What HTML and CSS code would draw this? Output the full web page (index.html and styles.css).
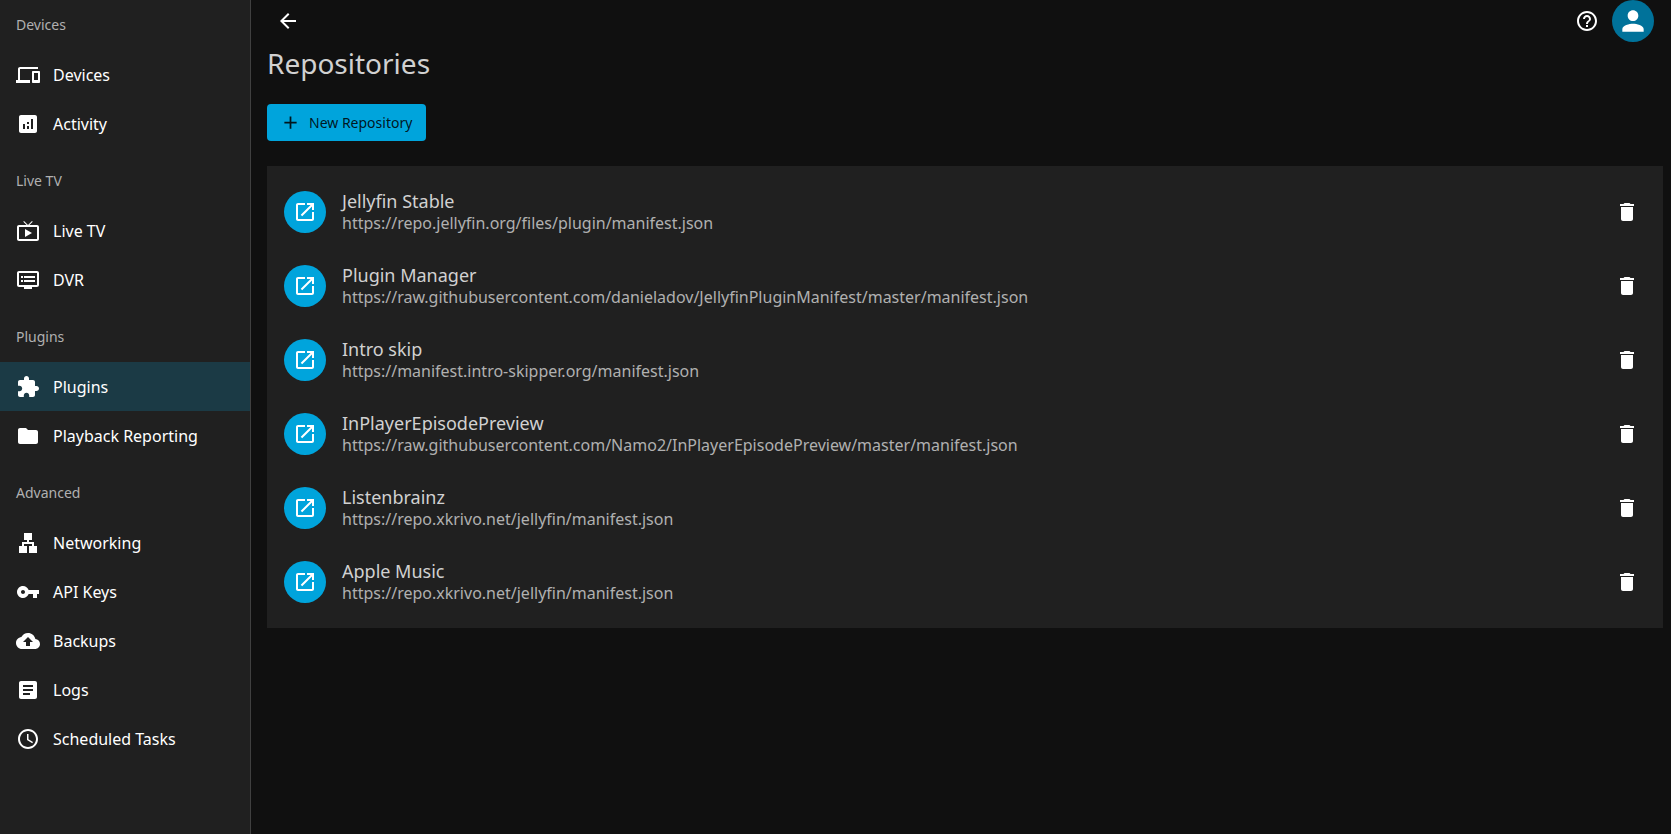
FILE: index.html
```html
<!DOCTYPE html>
<html lang="en">
<head>
  <meta charset="UTF-8">
  <meta name="viewport" content="width=device-width, initial-scale=1.0">
  <title>Repositories</title>
  <link rel="stylesheet" href="styles.css">
</head>
<body>
  <!-- Icons shared by several elements -->
  <svg class="sprite" aria-hidden="true">
    <symbol id="open" viewBox="0 0 24 24"><path d="M19 19H5V5h7V3H5c-1.110 0-2 .9-2 2v14c0 1.100.890 2 2 2h14c1.100 0 2-.9 2-2v-7h-2zM14 3v2h3.590l-9.830 9.830 1.410 1.410L19 6.410V10h2V3z"/></symbol>
    <symbol id="trash" viewBox="0 0 24 24"><path d="M6 19c0 1.100.9 2 2 2h8c1.100 0 2-.9 2-2V7H6zM19 4h-3.500l-1-1h-5l-1 1H5v2h14z"/></symbol>
  </svg>

  <div class="layout">
    <nav class="sidebar">
      <section>
        <h2>Devices</h2>
        <a href="#devices"><svg class="icon" viewBox="0 0 24 24"><path d="M4 6h18V4H4c-1.100 0-2 .9-2 2v11H0v3h14v-3H4zm19 2h-6c-.550 0-1 .450-1 1v10c0 .550.450 1 1 1h6c.550 0 1-.450 1-1V9c0-.550-.450-1-1-1m-1 9h-4v-7h4z"/></svg>Devices</a>
        <a href="#activity"><svg class="icon" viewBox="0 0 24 24"><path d="M19 3H5c-1.100 0-2 .9-2 2v14c0 1.100.9 2 2 2h14c1.100 0 2-.9 2-2V5c0-1.100-.9-2-2-2M9 17H7v-5h2zm4 0h-2v-3h2zm0-5h-2v-2h2zm4 5h-2V7h2z"/></svg>Activity</a>
      </section>
      <section>
        <h2>Live TV</h2>
        <a href="#livetv"><svg class="icon" viewBox="0 0 24 24"><path d="M21 6h-7.590l3.290-3.290L16 2l-4 4-4-4-.710.710L10.590 6H3c-1.100 0-2 .890-2 2v12c0 1.100.9 2 2 2h18c1.100 0 2-.9 2-2V8c0-1.110-.9-2-2-2m0 14H3V8h18zM9 10v8l7-4z"/></svg>Live TV</a>
        <a href="#dvr"><svg class="icon" viewBox="0 0 24 24"><path d="M21 3H3c-1.100 0-2 .9-2 2v12c0 1.100.9 2 2 2h5v2h8v-2h5c1.100 0 1.990-.9 1.990-2L23 5c0-1.100-.9-2-2-2m0 14H3V5h18zm-2-9H8v2h11zm0 4H8v2h11zM7 8H5v2h2zm0 4H5v2h2z"/></svg>DVR</a>
      </section>
      <section>
        <h2>Plugins</h2>
        <a href="#plugins" class="active"><svg class="icon" viewBox="0 0 24 24"><path d="M20.500 11H19V7c0-1.100-.9-2-2-2h-4V3.500C13 2.120 11.880 1 10.500 1S8 2.120 8 3.500V5H4c-1.100 0-1.990.9-1.990 2v3.800H3.500c1.490 0 2.700 1.210 2.700 2.700s-1.210 2.700-2.700 2.700H2V20c0 1.100.9 2 2 2h3.800v-1.500c0-1.490 1.210-2.700 2.700-2.700s2.700 1.210 2.700 2.700V22H17c1.100 0 2-.9 2-2v-4h1.500c1.380 0 2.500-1.120 2.500-2.500S21.880 11 20.500 11"/></svg>Plugins</a>
        <a href="#playback"><svg class="icon" viewBox="0 0 24 24"><path d="M10 4H4c-1.100 0-1.990.9-1.990 2L2 18c0 1.100.9 2 2 2h16c1.100 0 2-.9 2-2V8c0-1.100-.9-2-2-2h-8z"/></svg>Playback Reporting</a>
      </section>
      <section>
        <h2>Advanced</h2>
        <a href="#networking"><svg class="icon" viewBox="0 0 24 24"><path d="M13 22h8v-7h-3v-4h-5V9h3V2H8v7h3v2H6v4H3v7h8v-7H8v-2h8v2h-3z"/></svg>Networking</a>
        <a href="#keys"><svg class="icon" viewBox="0 0 24 24"><path d="M12.650 10C11.830 7.670 9.610 6 7 6c-3.310 0-6 2.690-6 6s2.690 6 6 6c2.610 0 4.830-1.670 5.650-4H17v4h4v-4h2v-4zM7 14c-1.100 0-2-.9-2-2s.9-2 2-2 2 .9 2 2-.9 2-2 2"/></svg>API Keys</a>
        <a href="#backups"><svg class="icon" viewBox="0 0 24 24"><path d="M19.350 10.040C18.670 6.590 15.640 4 12 4 9.110 4 6.600 5.640 5.350 8.040 2.340 8.360 0 10.910 0 14c0 3.310 2.690 6 6 6h13c2.760 0 5-2.240 5-5 0-2.640-2.050-4.780-4.650-4.960M14 13v4h-4v-4H7l5-5 5 5z"/></svg>Backups</a>
        <a href="#logs"><svg class="icon" viewBox="0 0 24 24"><path d="M19 3H5c-1.100 0-2 .9-2 2v14c0 1.100.9 2 2 2h14c1.100 0 2-.9 2-2V5c0-1.100-.9-2-2-2m-5 14H7v-2h7zm3-4H7v-2h10zm0-4H7V7h10z"/></svg>Logs</a>
        <a href="#tasks"><svg class="icon" viewBox="0 0 24 24"><path d="M11.990 2C6.470 2 2 6.480 2 12s4.470 10 9.990 10C17.520 22 22 17.520 22 12S17.520 2 11.990 2M12 20c-4.420 0-8-3.580-8-8s3.580-8 8-8 8 3.580 8 8-3.580 8-8 8m.5-13H11v6l5.250 3.150.750-1.230-4.500-2.670z"/></svg>Scheduled Tasks</a>
      </section>
    </nav>

    <div class="content">
      <header class="topbar">
        <button class="icon-button" aria-label="Back"><svg class="icon" viewBox="0 0 24 24"><path d="M20 11H7.830l5.590-5.590L12 4l-8 8 8 8 1.410-1.410L7.830 13H20z"/></svg></button>
        <div class="topbar-right">
          <a class="icon-button" href="#help" aria-label="Help"><svg class="icon" viewBox="0 0 24 24"><path d="M11 18h2v-2h-2zm1-16C6.480 2 2 6.480 2 12s4.480 10 10 10 10-4.480 10-10S17.520 2 12 2m0 18c-4.410 0-8-3.590-8-8s3.590-8 8-8 8 3.590 8 8-3.590 8-8 8m0-14c-2.210 0-4 1.790-4 4h2c0-1.100.9-2 2-2s2 .9 2 2c0 2-3 1.750-3 5h2c0-2.250 3-2.500 3-5 0-2.210-1.790-4-4-4"/></svg></a>
          <button class="round avatar" aria-label="User menu"><svg class="icon" viewBox="0 0 24 24"><path d="M12 12c2.210 0 4-1.790 4-4s-1.790-4-4-4-4 1.790-4 4 1.790 4 4 4m0 2c-2.670 0-8 1.340-8 4v2h16v-2c0-2.660-5.330-4-8-4"/></svg></button>
        </div>
      </header>

      <main>
        <h1>Repositories</h1>
        <button class="new-button"><svg class="icon" viewBox="0 0 24 24"><path d="M19 13h-6v6h-2v-6H5v-2h6V5h2v6h6z"/></svg>New Repository</button>

        <ul class="repo-list">
          <li>
            <a class="round" href="https://repo.jellyfin.org/files/plugin/manifest.json" aria-label="Open Jellyfin Stable"><svg class="icon"><use href="#open"/></svg></a>
            <div class="repo-text">
              <h3>Jellyfin Stable</h3>
              <p>https://repo.jellyfin.org/files/plugin/manifest.json</p>
            </div>
            <button class="icon-button" aria-label="Delete Jellyfin Stable"><svg class="icon"><use href="#trash"/></svg></button>
          </li>
          <li>
            <a class="round" href="https://raw.githubusercontent.com/danieladov/JellyfinPluginManifest/master/manifest.json" aria-label="Open Plugin Manager"><svg class="icon"><use href="#open"/></svg></a>
            <div class="repo-text">
              <h3>Plugin Manager</h3>
              <p>https://raw.githubusercontent.com/danieladov/JellyfinPluginManifest/master/manifest.json</p>
            </div>
            <button class="icon-button" aria-label="Delete Plugin Manager"><svg class="icon"><use href="#trash"/></svg></button>
          </li>
          <li>
            <a class="round" href="https://manifest.intro-skipper.org/manifest.json" aria-label="Open Intro skip"><svg class="icon"><use href="#open"/></svg></a>
            <div class="repo-text">
              <h3>Intro skip</h3>
              <p>https://manifest.intro-skipper.org/manifest.json</p>
            </div>
            <button class="icon-button" aria-label="Delete Intro skip"><svg class="icon"><use href="#trash"/></svg></button>
          </li>
          <li>
            <a class="round" href="https://raw.githubusercontent.com/Namo2/InPlayerEpisodePreview/master/manifest.json" aria-label="Open InPlayerEpisodePreview"><svg class="icon"><use href="#open"/></svg></a>
            <div class="repo-text">
              <h3>InPlayerEpisodePreview</h3>
              <p>https://raw.githubusercontent.com/Namo2/InPlayerEpisodePreview/master/manifest.json</p>
            </div>
            <button class="icon-button" aria-label="Delete InPlayerEpisodePreview"><svg class="icon"><use href="#trash"/></svg></button>
          </li>
          <li>
            <a class="round" href="https://repo.xkrivo.net/jellyfin/manifest.json" aria-label="Open Listenbrainz"><svg class="icon"><use href="#open"/></svg></a>
            <div class="repo-text">
              <h3>Listenbrainz</h3>
              <p>https://repo.xkrivo.net/jellyfin/manifest.json</p>
            </div>
            <button class="icon-button" aria-label="Delete Listenbrainz"><svg class="icon"><use href="#trash"/></svg></button>
          </li>
          <li>
            <a class="round" href="https://repo.xkrivo.net/jellyfin/manifest.json" aria-label="Open Apple Music"><svg class="icon"><use href="#open"/></svg></a>
            <div class="repo-text">
              <h3>Apple Music</h3>
              <p>https://repo.xkrivo.net/jellyfin/manifest.json</p>
            </div>
            <button class="icon-button" aria-label="Delete Apple Music"><svg class="icon"><use href="#trash"/></svg></button>
          </li>
        </ul>
      </main>
    </div>
  </div>
</body>
</html>
```
FILE: styles.css
```css
* {
  box-sizing: border-box;
}

body {
  margin: 0;
  background-color: #101010;
  color: #d1d1d1;
  font-family: "Noto Sans", sans-serif;
  font-size: 16px;
}

h1, h2, h3, p, ul {
  margin: 0;
  padding: 0;
  font-weight: 400;
}

a {
  color: #fff;
  text-decoration: none;
}

button {
  border: none;
  padding: 0;
  font-family: inherit;
  cursor: pointer;
}

.sprite {
  display: none;
}

.icon {
  width: 24px;
  height: 24px;
  fill: currentColor;
  flex-shrink: 0;
}

.layout {
  display: flex;
  min-height: 100vh;
}

/* Sidebar */
.sidebar {
  width: 251px;
  flex-shrink: 0;
  background-color: #202020;
  border-right: 1px solid #404040;
}

.sidebar section {
  padding-bottom: 8px;
}

.sidebar h2 {
  padding: 0 16px;
  font-size: 14px;
  line-height: 50px;
  color: #b0b0b0;
}

.sidebar a {
  display: flex;
  align-items: center;
  gap: 13px;
  height: 49px;
  padding: 0 16px;
}

.sidebar a:hover {
  background-color: #2c2c2c;
}

.sidebar a.active {
  background-color: #1b3a45;
}

/* Top bar */
.content {
  flex: 1;
  min-width: 0;
}

.topbar {
  display: flex;
  justify-content: space-between;
  padding: 0 17px 0 16px;
}

.topbar-right {
  display: flex;
  gap: 4px;
}

.icon-button {
  display: flex;
  align-items: center;
  justify-content: center;
  width: 42px;
  height: 42px;
  background: none;
  color: #fff;
}

.round {
  display: flex;
  align-items: center;
  justify-content: center;
  flex-shrink: 0;
  width: 42px;
  height: 42px;
  border-radius: 50%;
  background-color: #00a4dc;
  color: #fff;
}

.avatar {
  background-color: #00729a;
}

.avatar .icon {
  width: 32px;
  height: 32px;
}

/* Repositories */
main {
  padding: 0 8px 0 16px;
}

h1 {
  font-size: 28px;
  line-height: 42px;
}

.new-button {
  display: flex;
  align-items: center;
  gap: 8px;
  height: 37px;
  margin: 20px 0 25px;
  padding: 0 14px 0 13px;
  border-radius: 4px;
  background-color: #00a4dc;
  color: rgba(0, 0, 0, 0.87);
  font-size: 14px;
}

.new-button .icon {
  width: 21px;
  height: 21px;
}

.repo-list {
  list-style: none;
  padding: 9px 15px 9px 17px;
  background-color: #202020;
}

.repo-list li {
  display: flex;
  align-items: center;
  gap: 16px;
  height: 74px;
}

.repo-text {
  flex: 1;
  min-width: 0;
}

.repo-text h3 {
  font-size: 18px;
  line-height: 22px;
}

.repo-text p {
  font-size: 16px;
  line-height: 22px;
  color: #b0b0b0;
}
```
